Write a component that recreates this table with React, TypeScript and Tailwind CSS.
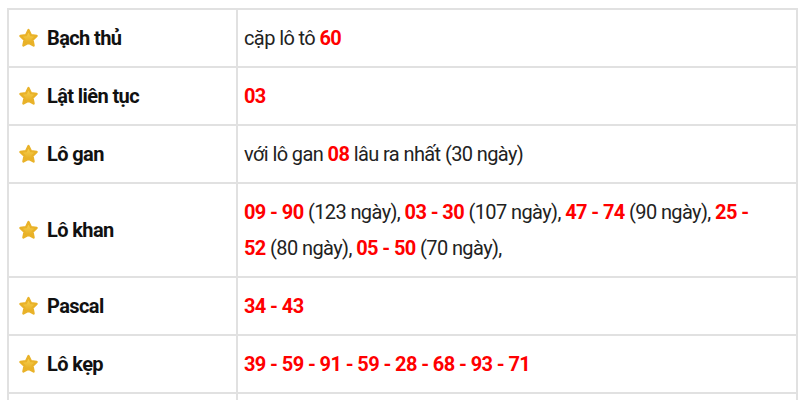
const font = {
	fontFamily: 'Roboto, "Liberation Sans", sans-serif',
};

const Star = () => (
	<svg width="21" height="20" viewBox="0 0 24 23" className="shrink-0">
		<defs>
			<linearGradient id="starFill" x1="0" y1="0" x2="0" y2="1">
				<stop offset="0%" stopColor="#fcd95a" />
				<stop offset="100%" stopColor="#e2a61a" />
			</linearGradient>
		</defs>
		<path
			d="M12 2.2 L14.9 8.3 L21.4 9.1 L16.6 13.6 L17.9 20.2 L12 16.9 L6.1 20.2 L7.4 13.6 L2.6 9.1 L9.1 8.3 Z"
			fill="url(#starFill)"
			stroke="#e9b228"
			strokeWidth="2.6"
			strokeLinejoin="round"
		/>
	</svg>
);

const R = ({ children }: { children: React.ReactNode }) => (
	<b className="font-bold text-[#ff0000]">{children}</b>
);

const rows: { label: string; value: React.ReactNode }[] = [
	{
		label: "Bạch thủ",
		value: (
			<>
				cặp lô tô <R>60</R>
			</>
		),
	},
	{ label: "Lật liên tục", value: <R>03</R> },
	{
		label: "Lô gan",
		value: (
			<>
				với lô gan <R>08</R> lâu ra nhất (30 ngày)
			</>
		),
	},
	{
		label: "Lô khan",
		value: (
			<>
				<R>09 - 90</R> (123 ngày), <R>03 - 30</R> (107 ngày), <R>47 - 74</R> (90 ngày),{" "}
				<R>25 - 52</R> (80 ngày), <R>05 - 50</R> (70 ngày),
			</>
		),
	},
	{ label: "Pascal", value: <R>34 - 43</R> },
	{ label: "Lô kẹp", value: <R>39 - 59 - 91 - 59 - 28 - 68 - 93 - 71</R> },
];

export default function App() {
	return (
		<div className="w-[800px] h-[400px] overflow-hidden bg-white pt-2 pl-[7px]" style={font}>
			<table className="w-[791px] border-collapse text-[20px] leading-[36px] tracking-[-0.6px] text-[#222]">
				<tbody>
					{rows.map((r) => (
						<tr key={r.label}>
							<td className="w-[229px] border-2 border-[#e1e1e1] pl-[9px] py-[10px] align-middle">
								<div className="flex items-center gap-[8px] font-bold text-[#111]">
									<Star />
									<span>{r.label}</span>
								</div>
							</td>
							<td className="border-2 border-[#e1e1e1] pl-[6px] pr-[46px] py-[10px] align-middle">
								{r.value}
							</td>
						</tr>
					))}
					<tr className="h-[56px]">
						<td className="border-2 border-[#e1e1e1]" />
						<td className="border-2 border-[#e1e1e1]" />
					</tr>
				</tbody>
			</table>
		</div>
	);
}
